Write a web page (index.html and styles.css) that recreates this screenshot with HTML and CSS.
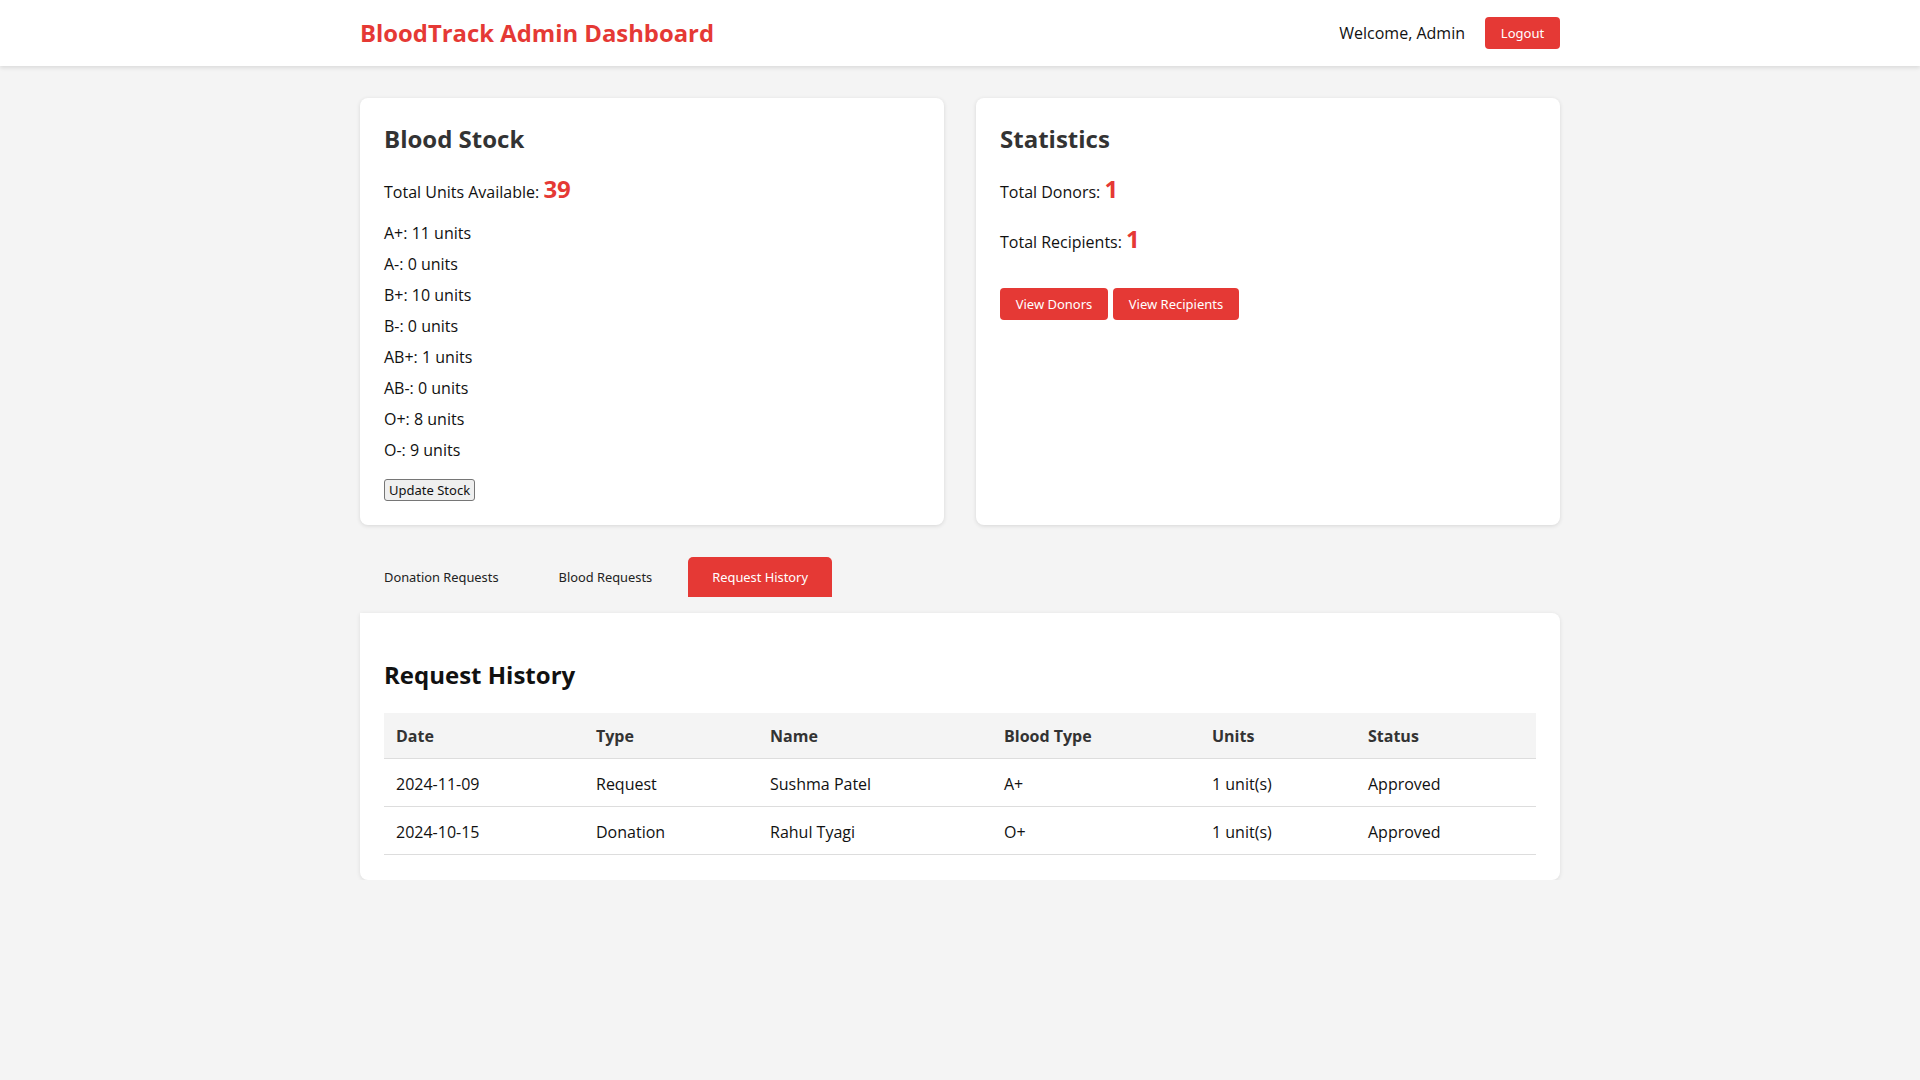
FILE: index.html
```html
<!DOCTYPE html>
<html lang="en">
<head>
<meta charset="utf-8">
<title>BloodTrack Admin Dashboard</title>
<link rel="stylesheet" href="styles.css">
</head>
<body>
<header class="topbar">
  <div class="topbar-inner">
    <h1 class="brand">BloodTrack Admin Dashboard</h1>
    <div class="user-area">
      <span class="welcome">Welcome, Admin</span>
      <button class="btn btn-red btn-logout">Logout</button>
    </div>
  </div>
</header>

<main class="container">
  <section class="cards">
    <div class="card">
      <h2 class="card-title">Blood Stock</h2>
      <p class="total">Total Units Available: <span class="big">39</span></p>
      <div class="stock-list">
        <p class="stock-item">A+: 11 units</p>
        <p class="stock-item">A-: 0 units</p>
        <p class="stock-item">B+: 10 units</p>
        <p class="stock-item">B-: 0 units</p>
        <p class="stock-item">AB+: 1 units</p>
        <p class="stock-item">AB-: 0 units</p>
        <p class="stock-item">O+: 8 units</p>
        <p class="stock-item">O-: 9 units</p>
      </div>
      <button class="btn-plain">Update Stock</button>
    </div>
    <div class="card">
      <h2 class="card-title">Statistics</h2>
      <p class="total">Total Donors: <span class="big">1</span></p>
      <p class="total">Total Recipients: <span class="big">1</span></p>
      <div class="actions">
        <button class="btn btn-red btn-view btn-donors">View Donors</button>
        <button class="btn btn-red btn-view btn-recipients">View Recipients</button>
      </div>
    </div>
  </section>

  <nav class="tabs">
    <button class="tab">Donation Requests</button>
    <button class="tab">Blood Requests</button>
    <button class="tab tab-active">Request History</button>
  </nav>

  <section class="panel">
    <h2 class="panel-title">Request History</h2>
    <table class="history">
      <thead>
        <tr>
          <th class="c-date">Date</th>
          <th class="c-type">Type</th>
          <th class="c-name">Name</th>
          <th class="c-blood">Blood Type</th>
          <th class="c-units">Units</th>
          <th class="c-status">Status</th>
        </tr>
      </thead>
      <tbody>
        <tr>
          <td>2024-11-09</td>
          <td>Request</td>
          <td>Sushma Patel</td>
          <td>A+</td>
          <td>1 unit(s)</td>
          <td>Approved</td>
        </tr>
        <tr>
          <td>2024-10-15</td>
          <td>Donation</td>
          <td>Rahul Tyagi</td>
          <td>O+</td>
          <td>1 unit(s)</td>
          <td>Approved</td>
        </tr>
      </tbody>
    </table>
  </section>
</main>
</body>
</html>
```

FILE: styles.css
```css
* { box-sizing: border-box; }

body {
  margin: 0;
  background: #f4f4f4;
  font-family: "Open Sans", "Noto Sans", sans-serif;
  font-size: 16px;
  color: #222;
}

.topbar {
  background: #fff;
  height: 66px;
  box-shadow: 0 2px 4px rgba(0, 0, 0, 0.1);
}

.topbar-inner {
  width: 1200px;
  margin: 0 auto;
  height: 66px;
  display: flex;
  align-items: center;
  justify-content: space-between;
}

.brand {
  margin: 0;
  font-size: 23.85px;
  font-weight: 700;
  color: #e53935;
  line-height: 32px;
}

.user-area {
  display: flex;
  align-items: center;
  gap: 20px;
}

.welcome {
  font-size: 16px;
  color: #111;
}

.btn {
  font-family: "Noto Sans", "DejaVu Sans", sans-serif;
  font-size: 13px;
  border: none;
  border-radius: 4px;
  cursor: pointer;
  white-space: nowrap;
}

.btn-red {
  background: #e53935;
  color: #fff;
}

.btn-logout {
  width: 75px;
  height: 32px;
  padding: 0;
}

.container {
  width: 1200px;
  margin: 32px auto 0;
}

.cards {
  display: grid;
  grid-template-columns: 1fr 1fr;
  gap: 32px;
}

.card {
  background: #fff;
  border-radius: 8px;
  padding: 24px;
  box-shadow: 0 1px 4px rgba(0, 0, 0, 0.12);
}

.card-title {
  margin: 1px 0 17px;
  font-size: 24px;
  line-height: 32px;
  color: #333;
  font-weight: 700;
}

.total {
  margin: 0 0 16px;
  height: 34px;
  line-height: 34px;
  color: #111;
}

.big {
  font-size: 24px;
  font-weight: 700;
  color: #e53935;
  vertical-align: baseline;
}

.stock-list {
  margin-top: 2px;
}

.stock-item {
  margin: 0 0 8px;
  line-height: 23px;
  color: #111;
}

.btn-plain {
  margin-top: 9px;
  font-family: "Noto Sans", "DejaVu Sans", sans-serif;
  font-size: 13px;
  height: 22px;
  padding: 0 4px;
  background: #efefef;
  border: 1px solid #767676;
  border-radius: 3px;
  color: #111;
}

.actions {
  margin-top: 32px;
  display: flex;
  gap: 5px;
}

.btn-view {
  height: 32px;
  padding: 0;
}

.btn-donors {
  width: 108px;
}

.btn-recipients {
  width: 126px;
}

.tabs {
  margin-top: 32px;
  display: flex;
  gap: 12px;
}

.tab {
  height: 40px;
  padding: 0 24px;
  background: transparent;
  border: none;
  border-radius: 5px 5px 0 0;
  font-family: "Noto Sans", "DejaVu Sans", sans-serif;
  font-size: 12.85px;
  color: #222;
  white-space: nowrap;
}

.tab-active {
  background: #e53935;
  color: #fff;
}

.panel {
  margin-top: 16px;
  background: #fff;
  border-radius: 0 8px 8px 8px;
  padding: 24px 24px 25px;
  box-shadow: 0 1px 4px rgba(0, 0, 0, 0.1);
}

.panel-title {
  margin: 22px 0 22px;
  font-size: 24px;
  line-height: 32px;
  font-weight: 700;
  color: #111;
}

.history {
  width: 100%;
  border-collapse: collapse;
  table-layout: fixed;
}

.history th,
.history td {
  text-align: left;
  padding: 12.5px 12px 10.5px;
  line-height: 24px;
  border-bottom: 1px solid #ddd;
}

.history th {
  background: #f4f4f4;
  color: #333;
  font-weight: 700;
  padding: 10.5px 12px 10.5px;
}

.history td {
  color: #111;
}

.c-date { width: 200px; }
.c-type { width: 174px; }
.c-name { width: 234px; }
.c-blood { width: 208px; }
.c-units { width: 156px; }
.c-status { width: auto; }
```
